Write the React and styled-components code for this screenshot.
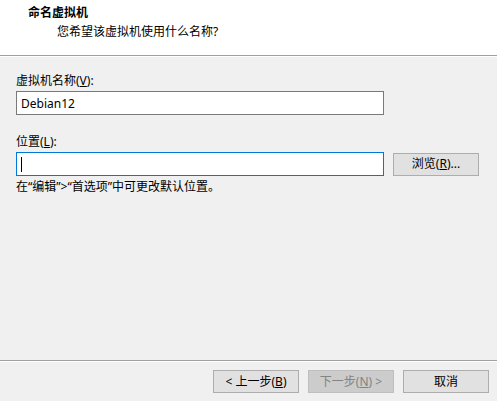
import styled, { createGlobalStyle } from 'styled-components';

const GlobalStyle = createGlobalStyle`
  html, body {
    margin: 0;
    padding: 0;
    background: #f0f0f0;
  }
  body {
    font-family: "Segoe UI", "Noto Sans", "Noto Sans CJK SC", sans-serif;
    font-size: 12px;
    color: #000;
  }
`;

const Key = ({ children }) => <u>{children}</u>;

const App = () => {
  return (
    <>
      <GlobalStyle />
      <Wizard>
        <Header>
          <Title>命名虚拟机</Title>
          <Subtitle>您希望该虚拟机使用什么名称?</Subtitle>
        </Header>

        <Body>
          <Label $top={17}>
            虚拟机名称(<Key>V</Key>):
          </Label>
          <Row>
            <Field>Debian12</Field>
          </Row>

          <Label $top={19}>
            位置(<Key>L</Key>):
          </Label>
          <Row>
            <Field $focused>
              <Caret />
            </Field>
            <Button>
              浏览(<Key>R</Key>)...
            </Button>
          </Row>
          <Hint>在“编辑”&gt;“首选项”中可更改默认位置。</Hint>
        </Body>

        <Footer>
          <Button>
            &lt; 上一步(<Key>B</Key>)
          </Button>
          <Button disabled>
            下一步(<Key>N</Key>) &gt;
          </Button>
          <Button>取消</Button>
        </Footer>
      </Wizard>
    </>
  );
};

export default App;

const Wizard = styled.div`
  display: flex;
  flex-direction: column;
  width: 497px;
  height: 401px;
  overflow: hidden;
`;

const Header = styled.div`
  height: 56px;
  box-sizing: border-box;
  padding: 5px 0 0 28px;
  background: #fff;
  border-bottom: 1px solid #a0a0a0;
  box-shadow: 0 1px 0 #fff;
`;

const Title = styled.div`
  font-weight: 700;
  line-height: 16px;
`;

const Subtitle = styled.div`
  margin-top: 3px;
  padding-left: 29px;
  line-height: 16px;
`;

const Body = styled.div`
  flex: 1;
  padding: 0 16px;
`;

const Label = styled.div`
  margin-top: ${(p) => p.$top}px;
  line-height: 16px;
  margin-bottom: 2px;
`;

const Row = styled.div`
  display: flex;
  align-items: center;
  gap: 9px;
`;

const Field = styled.div`
  width: 368px;
  height: 24px;
  box-sizing: border-box;
  padding: 0 4px;
  display: flex;
  align-items: center;
  background: #fff;
  border: 1px solid ${(p) => (p.$focused ? '#0078d7' : '#7a7a7a')};
`;

const Caret = styled.span`
  display: block;
  width: 1px;
  height: 15px;
  background: #000;
`;

const Button = styled.button`
  width: 86px;
  height: 23px;
  box-sizing: border-box;
  padding: 0;
  font: inherit;
  line-height: 16px;
  background: ${(p) => (p.disabled ? '#cccccc' : '#e1e1e1')};
  color: ${(p) => (p.disabled ? '#838383' : '#000')};
  border: 1px solid ${(p) => (p.disabled ? '#bfbfbf' : '#adadad')};
  border-radius: 0;
`;

const Hint = styled.div`
  margin-top: 3px;
  line-height: 16px;
`;

const Footer = styled.div`
  display: flex;
  justify-content: flex-end;
  gap: 9px;
  padding: 9px 8px 8px;
  border-top: 1px solid #a0a0a0;
  box-shadow: inset 0 1px 0 #fff;
`;
